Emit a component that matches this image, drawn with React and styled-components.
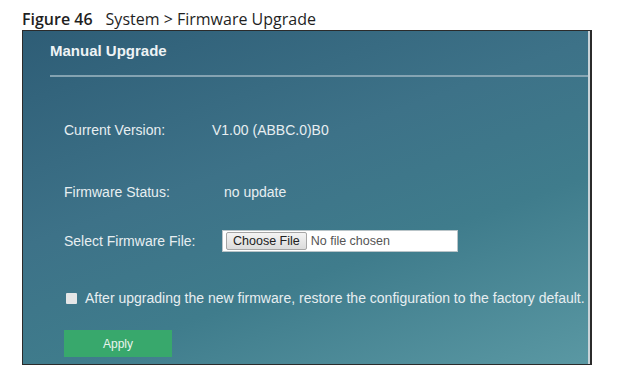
import React from 'react';
import styled, {createGlobalStyle} from 'styled-components';

const GlobalStyle = createGlobalStyle`
    body {
        margin: 0;
        background: #ffffff;
    }
`;

const Page = styled.div`
    padding: 8px 0 0 22px;
    width: 642px;
    height: 386px;
    box-sizing: border-box;
`;

const Caption = styled.div`
    font-family: 'Open Sans', 'DejaVu Sans', sans-serif;
    font-size: 16px;
    line-height: 22px;
    color: #1f1f1f;
    height: 22px;
    white-space: nowrap;
`;

const FigureNo = styled.span`
    font-weight: 600;
    margin-right: 13px;
`;

const Panel = styled.div`
    width: 570px;
    height: 335px;
    box-sizing: border-box;
    border: 1px solid #2b2b2b;
    border-right-width: 2px;
    background: linear-gradient(160deg, #2e5d76 0%, #3d7288 40%, #3f7c8c 65%, #5a98a3 100%);
    box-shadow: inset -2px 0 0 #c9d3d8;
    padding: 11px 2px 0 27px;
    font-family: 'Liberation Sans', Arial, sans-serif;
    color: #e7eef1;
`;

const Title = styled.h2`
    margin: 0;
    font-size: 15px;
    font-weight: 700;
    line-height: 18px;
    color: #eef3f5;
`;

const Divider = styled.div`
    height: 2px;
    margin-top: 15px;
    background: #93aebb;
    opacity: 0.85;
`;

const Form = styled.div`
    display: flex;
    flex-direction: column;
    padding-left: 14px;
`;

const Row = styled.div`
    display: flex;
    align-items: center;
    height: 22px;
    margin-top: ${({$top}) => $top}px;
    font-size: 14px;
    white-space: nowrap;
`;

const Label = styled.span`
    width: ${({$width}) => $width}px;
    flex-shrink: 0;
`;

const FileBox = styled.div`
    display: flex;
    align-items: center;
    width: 236px;
    height: 22px;
    box-sizing: border-box;
    padding: 2px 3px;
    background: #ffffff;
    border: 1px solid #b9c4c8;
`;

const ChooseButton = styled.div`
    height: 18px;
    box-sizing: border-box;
    padding: 0 6px;
    display: flex;
    align-items: center;
    font-size: 12.5px;
    color: #222;
    background: linear-gradient(#f4f4f4, #dcdcdc);
    border: 1px solid #a6a6a6;
    border-radius: 2px;
`;

const NoFile = styled.span`
    margin-left: 4px;
    font-size: 12.5px;
    color: #555;
`;

const CheckBox = styled.span`
    width: 11px;
    height: 11px;
    margin: 0 8px 0 2px;
    background: #e4e6e7;
    border-radius: 1px;
    flex-shrink: 0;
`;

const ApplyButton = styled.button`
    width: 108px;
    height: 27px;
    margin-top: 21px;
    border: none;
    background: #38a86c;
    color: #eaf4ee;
    font-family: 'Liberation Sans', Arial, sans-serif;
    font-size: 12px;
    padding: 0;
`;

export default function App() {
    return (
        <Page>
            <GlobalStyle />
            <Caption>
                <FigureNo>Figure 46</FigureNo>System &gt; Firmware Upgrade
            </Caption>
            <Panel>
                <Title>Manual Upgrade</Title>
                <Divider />
                <Form>
                    <Row $top={42}>
                        <Label $width={148}>Current Version:</Label>
                        <span>V1.00 (ABBC.0)B0</span>
                    </Row>
                    <Row $top={40}>
                        <Label $width={160}>Firmware Status:</Label>
                        <span>no update</span>
                    </Row>
                    <Row $top={27}>
                        <Label $width={158}>Select Firmware File:</Label>
                        <FileBox>
                            <ChooseButton>Choose File</ChooseButton>
                            <NoFile>No file chosen</NoFile>
                        </FileBox>
                    </Row>
                    <Row $top={35}>
                        <CheckBox />
                        <span>After upgrading the new firmware, restore the configuration to the factory default.</span>
                    </Row>
                    <ApplyButton>Apply</ApplyButton>
                </Form>
            </Panel>
        </Page>
    );
}
